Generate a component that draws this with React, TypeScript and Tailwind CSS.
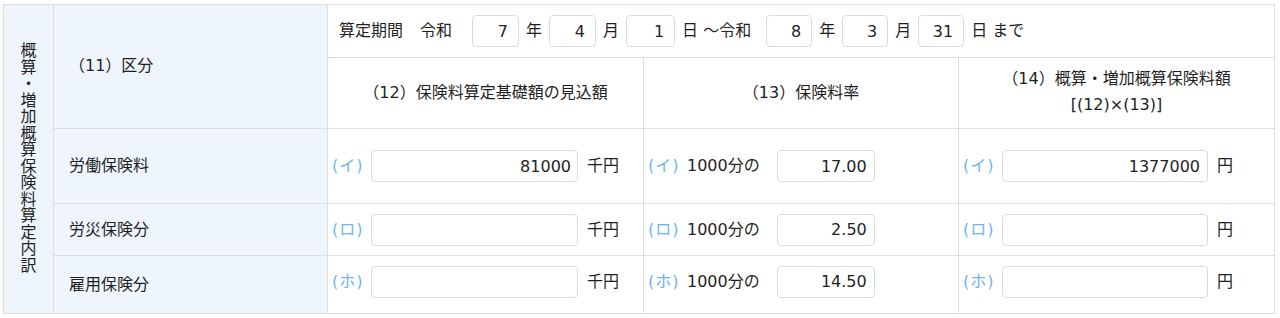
import React from "react";

const rows = [
  { label: "労働保険料", k: "イ", a: "81000", r: "17.00", c: "1377000", pad: "" },
  { label: "労災保険分", k: "ロ", a: "", r: "2.50", c: "", pad: "" },
  { label: "雇用保険分", k: "ホ", a: "", r: "14.50", c: "", pad: "pb-[6px]" },
];

const vertical = "概算・増加概算保険料算定内訳".split("");

function DateBox({ v, w = "w-[47px]" }: { v: string; w?: string }) {
  return (
    <input
      readOnly
      value={v}
      className={`${w} h-[32px] rounded-[4px] border border-[#dcdcdc] bg-white pr-[10px] text-right text-[16px] outline-none`}
    />
  );
}

function Kana({ k }: { k: string }) {
  return (
    <span className="inline-block w-[39px] shrink-0 tracking-[1px] text-[#6fb4f3]">
      ({k})
    </span>
  );
}

export default function App() {
  return (
    <div className="min-h-[318px] bg-white pl-[3px] pt-[4px] font-['DejaVu_Sans','Noto_Sans_CJK_JP',sans-serif] text-[16px] text-[#1f1f1f]">
      <div className="grid w-[1272px] grid-cols-[50px_274px_316px_315px_316px] grid-rows-[53px_71px_75px_52px_58px] border-l border-t border-[#dddddd]">
        <div className="row-span-5 flex flex-col items-center justify-center border-b border-r border-[#dddddd] bg-[#eef5fd] pb-[1px] text-[16px]">
          {vertical.map((ch, i) => (
            <span key={i} className="block h-[16.5px] leading-[16.5px]">
              {ch}
            </span>
          ))}
        </div>
        <div className="row-span-2 flex items-center border-b border-r border-[#dddddd] bg-[#eef5fd] pl-[15px] pb-[2px]">
          （11）区分
        </div>
        <div className="col-span-3 flex items-center border-b border-r border-[#dddddd] pl-[11px] whitespace-nowrap">
          <span>算定期間</span>
          <span className="ml-[17px]">令和</span>
          <span className="ml-[20px] flex items-center gap-[7px]">
            <DateBox v="7" />
            <span>年</span>
            <DateBox v="4" />
            <span>月</span>
            <DateBox v="1" w="w-[49px]" />
            <span>日 ～令和</span>
          </span>
          <span className="ml-[15px] flex items-center gap-[6px]">
            <DateBox v="8" w="w-[46px]" />
            <span className="mx-[1px]">年</span>
            <DateBox v="3" w="w-[46px]" />
            <span className="mx-[1px]">月</span>
            <DateBox v="31" w="w-[46px]" />
            <span className="ml-[1px]">日 まで</span>
          </span>
        </div>
        <div className="flex items-center justify-center border-b border-r border-[#dddddd] pb-[1px]">
          （12）保険料算定基礎額の見込額
        </div>
        <div className="flex items-center justify-center border-b border-r border-[#dddddd] pb-[1px]">
          （13）保険料率
        </div>
        <div className="flex flex-col items-center justify-center border-b border-r border-[#dddddd] pb-[2px] leading-[26px]">
          <span>（14）概算・増加概算保険料額</span>
          <span>[(12)×(13)]</span>
        </div>
        {rows.map((row) => (
          <React.Fragment key={row.k}>
            <div className="flex items-center border-b border-r border-[#dddddd] bg-[#eef5fd] pl-[15px]">
              {row.label}
            </div>
            <div className={`flex items-center border-b border-r border-[#dddddd] pl-[4px] ${row.pad}`}>
              <Kana k={row.k} />
              <input
                readOnly
                value={row.a}
                className="h-[32px] w-[207px] rounded-[4px] border border-[#dcdcdc] bg-white px-[6px] text-right text-[16px] outline-none"
              />
              <span className="ml-[9px]">千円</span>
            </div>
            <div className={`flex items-center border-b border-r border-[#dddddd] pl-[4px] ${row.pad}`}>
              <Kana k={row.k} />
              <span>1000分の</span>
              <input
                readOnly
                value={row.r}
                className="ml-[17px] h-[32px] w-[98px] rounded-[4px] border border-[#dcdcdc] bg-white px-[7px] text-right text-[16px] outline-none"
              />
            </div>
            <div className={`flex items-center border-b border-r border-[#dddddd] pl-[4px] ${row.pad}`}>
              <Kana k={row.k} />
              <input
                readOnly
                value={row.c}
                className="h-[32px] w-[206px] rounded-[4px] border border-[#dcdcdc] bg-white px-[7px] text-right text-[16px] outline-none"
              />
              <span className="ml-[9px]">円</span>
            </div>
          </React.Fragment>
        ))}
      </div>
    </div>
  );
}
